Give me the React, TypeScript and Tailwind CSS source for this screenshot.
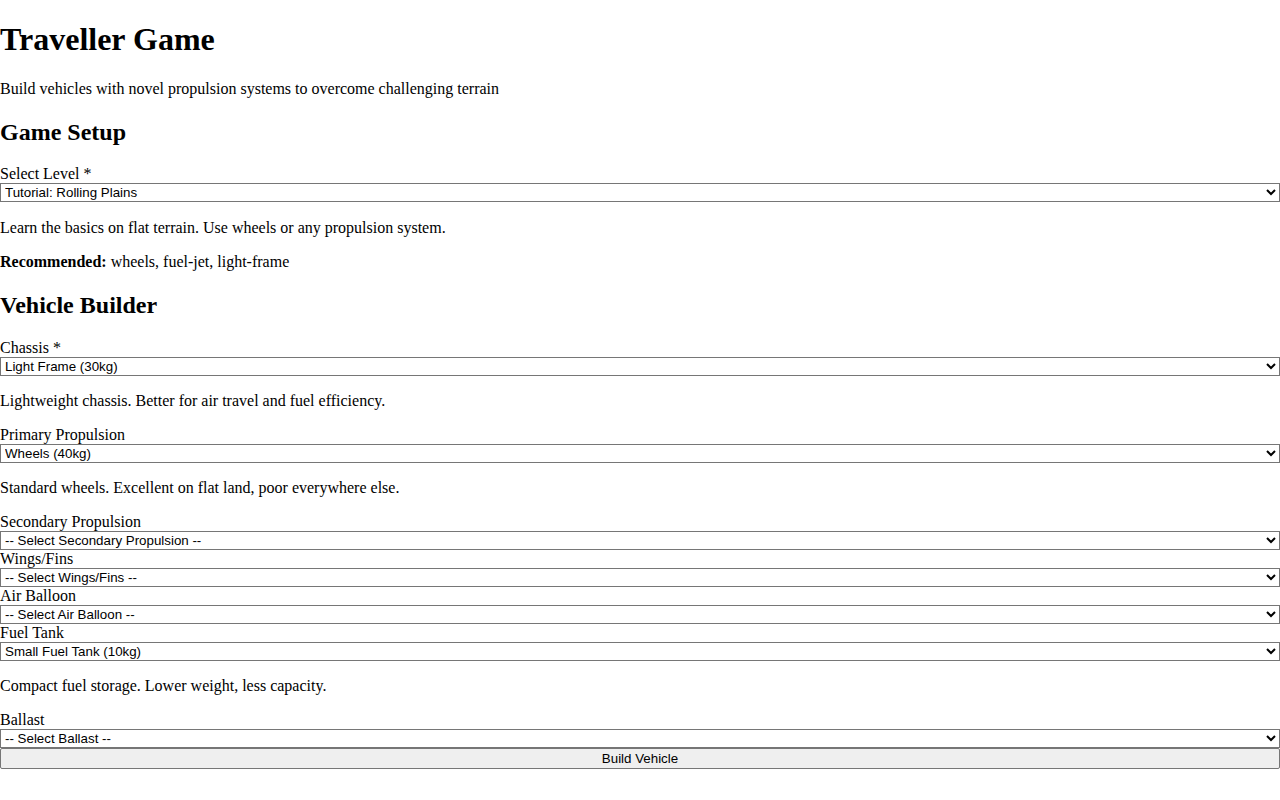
import { useState } from 'react';

type Option = { value: string; label: string };

const selectCls =
  "block w-full h-[19px] border border-[#767676] rounded-none bg-white text-black text-[13.333px] leading-[15px] font-['Liberation_Sans',Arial,sans-serif] pl-0";

function Field({
  label,
  options,
  value,
  onChange,
  hint,
}: {
  label: string;
  options: Option[];
  value: string;
  onChange: (v: string) => void;
  hint?: string;
}) {
  return (
    <div>
      <label className="block leading-[18px]">{label}</label>
      <select className={selectCls} value={value} onChange={(e) => onChange(e.target.value)}>
        {options.map((o) => (
          <option key={o.value} value={o.value}>
            {o.label}
          </option>
        ))}
      </select>
      {hint && <p className="my-4 leading-[18px]">{hint}</p>}
    </div>
  );
}

export default function App() {
  const [level, setLevel] = useState('tutorial');
  const [chassis, setChassis] = useState('light-frame');
  const [primary, setPrimary] = useState('wheels');
  const [secondary, setSecondary] = useState('');
  const [wings, setWings] = useState('');
  const [balloon, setBalloon] = useState('');
  const [tank, setTank] = useState('small-tank');
  const [ballast, setBallast] = useState('');

  return (
    <div className="bg-white text-black text-base font-['Liberation_Serif','Times_New_Roman',serif]">
      <h1 className="text-[32px] font-bold leading-[36.8px] my-[21.44px]">Traveller Game</h1>
      <p className="my-4 leading-[18px]">
        Build vehicles with novel propulsion systems to overcome challenging terrain
      </p>

      <h2 className="text-2xl font-bold leading-[28px] my-[19.92px]">Game Setup</h2>
      <div>
        <label className="block leading-[18px]">Select Level *</label>
        <select className={selectCls} value={level} onChange={(e) => setLevel(e.target.value)}>
          <option value="tutorial">Tutorial: Rolling Plains</option>
        </select>
        <p className="mt-[17px] mb-4 leading-[18px]">
          Learn the basics on flat terrain. Use wheels or any propulsion system.
        </p>
        <p className="my-4 leading-[18px]">
          <strong className="font-bold">Recommended:</strong> wheels, fuel-jet, light-frame
        </p>
      </div>

      <h2 className="text-2xl font-bold leading-[28px] my-[19.92px]">Vehicle Builder</h2>
      <Field
        label="Chassis *"
        value={chassis}
        onChange={setChassis}
        options={[{ value: 'light-frame', label: 'Light Frame (30kg)' }]}
        hint="Lightweight chassis. Better for air travel and fuel efficiency."
      />
      <Field
        label="Primary Propulsion"
        value={primary}
        onChange={setPrimary}
        options={[{ value: 'wheels', label: 'Wheels (40kg)' }]}
        hint="Standard wheels. Excellent on flat land, poor everywhere else."
      />
      <Field
        label="Secondary Propulsion"
        value={secondary}
        onChange={setSecondary}
        options={[{ value: '', label: '-- Select Secondary Propulsion --' }]}
      />
      <Field
        label="Wings/Fins"
        value={wings}
        onChange={setWings}
        options={[{ value: '', label: '-- Select Wings/Fins --' }]}
      />
      <Field
        label="Air Balloon"
        value={balloon}
        onChange={setBalloon}
        options={[{ value: '', label: '-- Select Air Balloon --' }]}
      />
      <Field
        label="Fuel Tank"
        value={tank}
        onChange={setTank}
        options={[{ value: 'small-tank', label: 'Small Fuel Tank (10kg)' }]}
        hint="Compact fuel storage. Lower weight, less capacity."
      />
      <Field
        label="Ballast"
        value={ballast}
        onChange={setBallast}
        options={[{ value: '', label: '-- Select Ballast --' }]}
      />
      <button
        type="button"
        className="block w-full h-[21px] border border-[#767676] rounded-[2px] bg-[#efefef] text-black text-[13.333px] leading-[15px] font-['Liberation_Sans',Arial,sans-serif]"
      >
        Build Vehicle
      </button>
      <div className="h-4" />
    </div>
  );
}
